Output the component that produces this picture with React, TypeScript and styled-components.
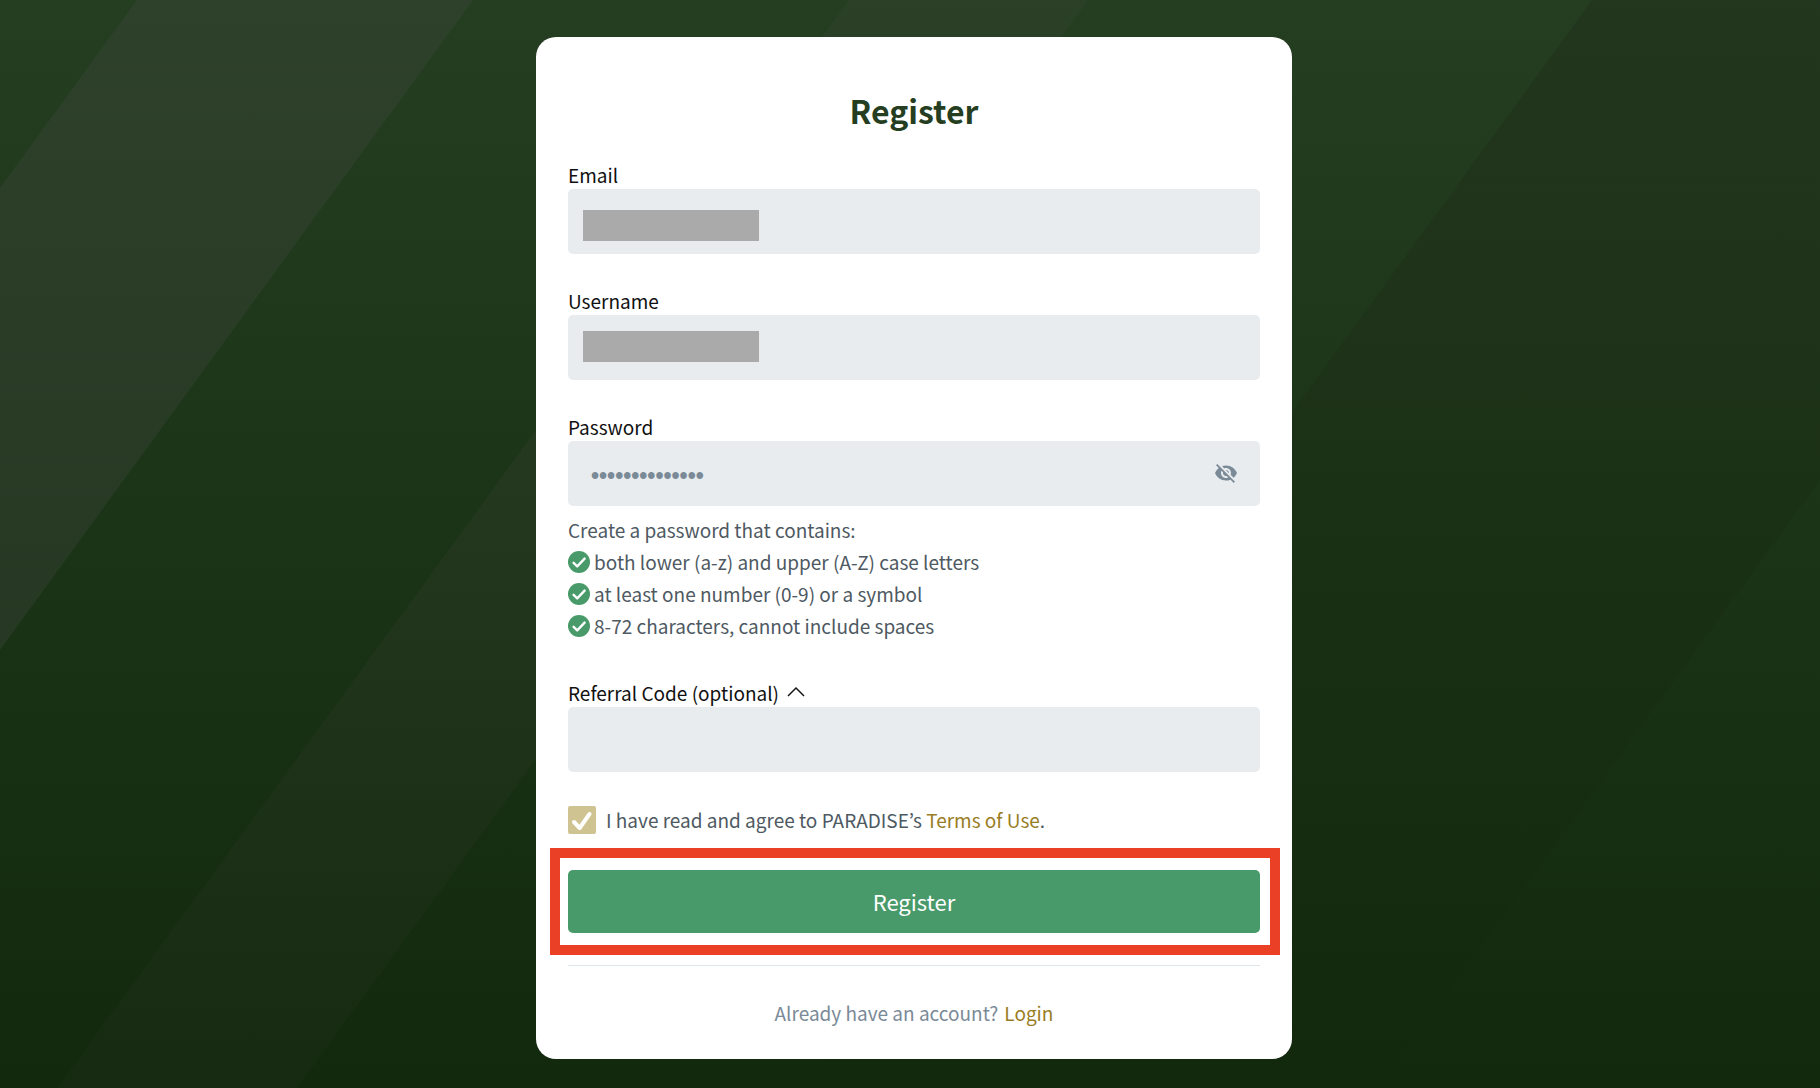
import React, { useState } from "react";
import styled, { createGlobalStyle } from "styled-components";
import { MdVisibilityOff } from "react-icons/md";

const GlobalStyle = createGlobalStyle`
  * { box-sizing: border-box; }
  body {
    margin: 0;
    background: #12290d;
    font-family: "Noto Sans CJK KR", "Noto Sans", sans-serif;
    font-size: 19px;
    line-height: 32px;
  }
`;

const Page = styled.main`
  position: relative;
  isolation: isolate;
  min-height: 100vh;
  padding: 37px 16px 29px 24px;
  background: linear-gradient(180deg, #253e21 0%, #1b3316 48%, #12290d 100%);
`;

const Backdrop = styled.svg`
  position: absolute;
  inset: 0;
  width: 100%;
  height: 100%;
  z-index: -1;
`;

const Card = styled.form`
  display: flex;
  flex-direction: column;
  max-width: 756px;
  margin: 0 auto;
  padding: 49px 32px 30px;
  border-radius: 20px;
  background: #fff;
`;

const Title = styled.h1`
  margin: 0 0 27px;
  font-size: 32px;
  line-height: 48px;
  font-weight: 700;
  text-align: center;
  color: #253e21;
`;

const Field = styled.div`
  margin-bottom: 33px;
`;

const LabelRow = styled.div`
  display: flex;
  align-items: center;
  gap: 6px;
  height: 28px;
  line-height: 28px;
  color: #111;
`;

const InputWrap = styled.div`
  position: relative;
  display: flex;
`;

const TextInput = styled.input`
  flex: 1;
  min-width: 0;
  height: 65px;
  padding: 0 64px 0 23px;
  border: 0;
  border-radius: 5px;
  background: #e9ecef;
  color: #7b8a97;
  font: inherit;

  &[type="password"] {
    padding-top: 5px;
    font-family: "Liberation Sans", sans-serif;
    font-size: 23px;
    font-weight: 700;
  }
`;

const Redaction = styled.span<{ $top: number }>`
  position: absolute;
  top: ${(p) => p.$top}px;
  left: 15px;
  width: 176px;
  height: 31px;
  background: #aaa;
`;

const IconButton = styled.button`
  display: flex;
  align-items: center;
  justify-content: center;
  width: 24px;
  height: 24px;
  padding: 0;
  border: 0;
  background: none;
  color: inherit;
  cursor: pointer;
`;

const RevealButton = styled(IconButton)`
  position: absolute;
  top: 20px;
  right: 22px;
  color: #7b8a97;
`;

const Hints = styled.div`
  margin: 8px 0 37px;
  color: #4e5962;
`;

const HintList = styled.ul`
  margin: 0;
  padding: 0;
  list-style: none;
`;

const Hint = styled.li`
  display: flex;
  align-items: center;
  gap: 4px;
`;

const PasswordField = styled(Field)`
  margin-bottom: 0;
`;

const Agreement = styled.div`
  display: flex;
  align-items: center;
  gap: 10px;
  height: 30px;
  margin-bottom: 35px;
  color: #4e5962;
`;

const CheckWrap = styled.span`
  position: relative;
  display: flex;

  svg {
    position: absolute;
    inset: 0;
    pointer-events: none;
  }
`;

const Checkbox = styled.input`
  appearance: none;
  width: 28px;
  height: 28px;
  margin: 0;
  border-radius: 2px;
  background: #cfc392;

  &:not(:checked) + svg {
    display: none;
  }
`;

const TextLink = styled.a`
  color: #997d25;
  text-decoration: none;
`;

const Highlight = styled.div`
  position: relative;
  display: flex;

  &::after {
    content: "";
    position: absolute;
    inset: -22px -20px -22px -18px;
    border: 10px solid #ea4025;
    pointer-events: none;
  }
`;

const Submit = styled.button`
  flex: 1;
  height: 63px;
  padding: 0 0 2px;
  border: 0;
  border-radius: 5px;
  background: #499a6a;
  color: #fff;
  font: inherit;
  font-size: 22px;
  cursor: pointer;
`;

const Divider = styled.hr`
  width: 100%;
  height: 1px;
  margin: 32px 0 31px;
  border: 0;
  background: #dfe6e9;
`;

const Footer = styled.p`
  display: flex;
  justify-content: center;
  gap: 6px;
  margin: 0;
  color: #7b8a97;
`;

const HINTS = [
  "both lower (a-z) and upper (A-Z) case letters",
  "at least one number (0-9) or a symbol",
  "8-72 characters, cannot include spaces",
];

function Stripes() {
  return (
    <Backdrop viewBox="0 0 1820 1088" preserveAspectRatio="none" aria-hidden="true">
      <defs>
        <linearGradient id="stripeLeft" x1="0" y1="0" x2="0" y2="1">
          <stop offset="0" stopColor="#7d5a82" stopOpacity="0.1" />
          <stop offset="1" stopColor="#7d6e87" stopOpacity="0.13" />
        </linearGradient>
        <linearGradient id="stripeMiddle" x1="0" y1="0" x2="0" y2="1">
          <stop offset="0" stopColor="#7d5a82" stopOpacity="0.06" />
          <stop offset="0.45" stopColor="#7d6482" stopOpacity="0.08" />
          <stop offset="1" stopColor="#7d6482" stopOpacity="0.03" />
        </linearGradient>
        <linearGradient id="stripeRight" x1="0" y1="0" x2="0" y2="1">
          <stop offset="0" stopColor="#140a0f" stopOpacity="0.16" />
          <stop offset="0.4" stopColor="#140a0f" stopOpacity="0.07" />
          <stop offset="1" stopColor="#140a0f" stopOpacity="0.01" />
        </linearGradient>
      </defs>
      <polygon points="137,0 473,0 0,650 0,188" fill="url(#stripeLeft)" />
      <polygon points="849,0 1088,0 297,1088 57,1088" fill="url(#stripeMiddle)" />
      <polygon points="1592,0 1820,0 1820,480 1378,1088 800,1088" fill="url(#stripeRight)" />
    </Backdrop>
  );
}

function CheckCircle() {
  return (
    <svg width="22" height="22" viewBox="0 0 22 22" aria-hidden="true">
      <circle cx="11" cy="11" r="11" fill="#499a6a" />
      <path d="M5.6 11.8 9.2 15.3 16.6 7.6" fill="none" stroke="#fff" strokeWidth="2.4" strokeLinecap="round" strokeLinejoin="round" />
    </svg>
  );
}

export default function App() {
  const [email, setEmail] = useState("");
  const [username, setUsername] = useState("");
  const [password, setPassword] = useState("Paradise123456");
  const [visible, setVisible] = useState(false);
  const [referralOpen, setReferralOpen] = useState(true);

  return (
    <Page>
      <GlobalStyle />
      <Stripes />
      <Card onSubmit={(e) => e.preventDefault()}>
        <Title>Register</Title>

        <Field>
          <LabelRow>
            <label htmlFor="email">Email</label>
          </LabelRow>
          <InputWrap>
            <TextInput id="email" type="email" value={email} onChange={(e) => setEmail(e.target.value)} />
            <Redaction $top={21} />
          </InputWrap>
        </Field>

        <Field>
          <LabelRow>
            <label htmlFor="username">Username</label>
          </LabelRow>
          <InputWrap>
            <TextInput id="username" value={username} onChange={(e) => setUsername(e.target.value)} />
            <Redaction $top={16} />
          </InputWrap>
        </Field>

        <PasswordField>
          <LabelRow>
            <label htmlFor="password">Password</label>
          </LabelRow>
          <InputWrap>
            <TextInput
              id="password"
              type={visible ? "text" : "password"}
              value={password}
              onChange={(e) => setPassword(e.target.value)}
            />
            <RevealButton type="button" aria-label="Show password" onClick={() => setVisible(!visible)}>
              <MdVisibilityOff size={24} />
            </RevealButton>
          </InputWrap>
        </PasswordField>
        <Hints>
          Create a password that contains:
          <HintList>
            {HINTS.map((hint) => (
              <Hint key={hint}>
                <CheckCircle />
                {hint}
              </Hint>
            ))}
          </HintList>
        </Hints>

        <Field>
          <LabelRow>
            <label htmlFor="referral">Referral Code (optional)</label>
            <IconButton type="button" aria-label="Toggle referral code" onClick={() => setReferralOpen(!referralOpen)}>
              <svg width="24" height="24" viewBox="0 0 24 24" aria-hidden="true">
                <path d="M3 15 11 7 19 15" fill="none" stroke="#161616" strokeWidth="1.5" />
              </svg>
            </IconButton>
          </LabelRow>
          {referralOpen && (
            <InputWrap>
              <TextInput id="referral" />
            </InputWrap>
          )}
        </Field>

        <Agreement>
          <CheckWrap>
            <Checkbox id="terms" type="checkbox" defaultChecked />
            <svg width="28" height="28" viewBox="0 0 28 28" aria-hidden="true">
              <path d="M6 16 11.7 22 21.5 8" fill="none" stroke="#fff" strokeWidth="4" strokeLinecap="round" strokeLinejoin="round" />
            </svg>
          </CheckWrap>
          <label htmlFor="terms">
            I have read and agree to PARADISE’s <TextLink href="#terms">Terms of Use</TextLink>.
          </label>
        </Agreement>

        <Highlight>
          <Submit type="submit">Register</Submit>
        </Highlight>

        <Divider />
        <Footer>
          Already have an account? <TextLink href="#login">Login</TextLink>
        </Footer>
      </Card>
    </Page>
  );
}
